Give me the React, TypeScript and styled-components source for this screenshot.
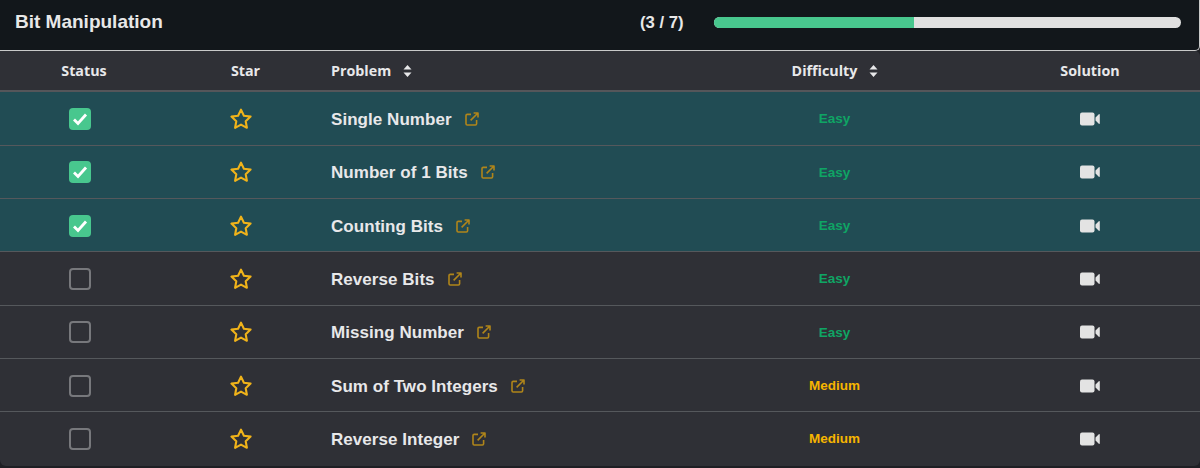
import React from "react";
import styled, { createGlobalStyle } from "styled-components";

const Global = createGlobalStyle`
  html, body { margin: 0; padding: 0; background: #1c1f24; }
  body { font-family: "Liberation Sans", Arial, sans-serif; overflow: hidden; }
`;
const Page = styled.div`width: 1200px; height: 468px; background: #1e1f24; overflow: hidden;`;
const TopBar = styled.div`
  display: flex; align-items: center; padding-left: 15px; box-sizing: border-box; height: 51px;
  background: #12171b; border-bottom: 1px solid #c9c9c9; border-right: 1px solid #c9c9c9;
  border-bottom-right-radius: 5px;
`;
const Title = styled.div`
  width: 625px; padding-bottom: 6px; color: #e8e8e8; font-size: 19px; font-weight: 700;
`;
const Count = styled.div`
  width: 74px; padding-bottom: 4px; color: #e8e8e8; font-size: 16.7px; font-weight: 700;
`;
const Track = styled.div`
  width: 467px; height: 11px; margin-bottom: 5px; border-radius: 6px; background: #e0e0e0; overflow: hidden;
`;
const Fill = styled.div<{ $pct: number }>`height: 100%; width: ${(p) => p.$pct}%; background: #48c78e;`;
const Columns = `display: grid; grid-template-columns: 168px 155px 367px 290px 220px; align-items: center;`;
const Head = styled.div`
  ${Columns} height: 41.3px; box-sizing: border-box; border-bottom: 2px solid #55565a; background: #2f3036;
  border-top-right-radius: 5px;
  color: #e8e8ea; font-family: "Open Sans", sans-serif; font-size: 14.3px; font-weight: 700;
`;
const HeadCell = styled.div<{ $left?: boolean }>`
  display: flex; align-items: center; gap: 12px; padding-left: ${(p) => (p.$left ? "8px" : "0")};
  justify-content: ${(p) => (p.$left ? "flex-start" : "center")};
`;
const Row = styled.div<{ $done: boolean }>`
  ${Columns} height: 53.33px; box-sizing: border-box; padding-top: 1px; border-bottom: 1px solid #55585c;
  background: ${(p) => (p.$done ? "#214c54" : "#2f3036")};
  &:last-child { border-bottom: none; padding-bottom: 1px; border-radius: 0 0 6px 6px; }
`;
const Center = styled.div`display: flex; justify-content: center; align-items: center;`;
const CheckCell = styled.div`display: flex; justify-content: center; align-items: center; padding-right: 8px;`;
const StarCell = styled.div`display: flex; justify-content: center; align-items: center; padding-right: 10px;`;
const LevelCell = styled.div`display: flex; justify-content: center; align-items: center; padding-right: 1px;`;
const Check = styled.div<{ $on: boolean }>`
  width: 22px; height: 22px; box-sizing: border-box; border-radius: 4px;
  display: flex; align-items: center; justify-content: center;
  background: ${(p) => (p.$on ? "#48c78e" : "transparent")};
  border: ${(p) => (p.$on ? "none" : "2px solid #77787c")};
`;
const ProblemCell = styled.div`display: flex; align-items: center; gap: 13px; padding-left: 8px;`;
const Name = styled.span`color: #e8e8ea; font-size: 17px; font-weight: 700; letter-spacing: 0.05px; padding-top: 2px;`;
const Level = styled.span<{ $c: string }>`color: ${(p) => p.$c}; font-size: 13.5px; font-weight: 700;`;

const Sort = () => (
  <svg width="9" height="14" viewBox="0 0 9 14"><path fill="#e8e8ea" d="M4.5 1 8.5 5.6H.5zM4.5 13 .5 8.4h8z" /></svg>
);
const Tick = () => (
  <svg width="22" height="22" viewBox="0 0 22 22"><path d="M5 11.5 9 15.5 17 6.5" fill="none" stroke="#fff" strokeWidth="2.8" /></svg>
);
const Star = () => (
  <svg width="24" height="24" viewBox="0 0 24 24">
    <path d="M12 2.6l2.9 6.1 6.7.9-4.9 4.6 1.2 6.6L12 17.6l-5.9 3.2 1.2-6.6-4.9-4.6 6.7-.9z" fill="none" stroke="#f0b31a" strokeWidth="2.1" strokeLinejoin="round" />
  </svg>
);
const Ext = () => (
  <svg width="14" height="14" viewBox="0 0 14 14" fill="none" stroke="#b0851a" strokeWidth="1.6" strokeLinejoin="round">
    <path d="M6 2.4H2.2A1.2 1.2 0 0 0 1 3.6v8.2A1.2 1.2 0 0 0 2.2 13h8.2a1.2 1.2 0 0 0 1.2-1.2V8M5.6 8.4 13 1M8.6 1H13v4.4" />
  </svg>
);
const Video = () => (
  <svg width="20" height="14" viewBox="0 0 20 14">
    <rect x="0" y="0.5" width="14.5" height="13" rx="2" fill="#e3e3e3" />
    <path fill="#e3e3e3" d="M15.5 5.5 18.8 2.2c.4-.4 1-.1 1 .5v8.6c0 .6-.6.9-1 .5L15.5 8.5z" />
  </svg>
);

const rows = [
  ["Single Number", "Easy", true],
  ["Number of 1 Bits", "Easy", true],
  ["Counting Bits", "Easy", true],
  ["Reverse Bits", "Easy", false],
  ["Missing Number", "Easy", false],
  ["Sum of Two Integers", "Medium", false],
  ["Reverse Integer", "Medium", false],
] as const;

export default function App() {
  return (
    <Page>
      <Global />
      <TopBar>
        <Title>Bit Manipulation</Title>
        <Count>(3 / 7)</Count>
        <Track><Fill $pct={(3 / 7) * 100} /></Track>
      </TopBar>
      <Head>
        <HeadCell>Status</HeadCell>
        <HeadCell>Star</HeadCell>
        <HeadCell $left>Problem <Sort /></HeadCell>
        <HeadCell>Difficulty <Sort /></HeadCell>
        <HeadCell>Solution</HeadCell>
      </Head>
      {rows.map(([name, level, done]) => (
        <Row key={name} $done={done}>
          <CheckCell><Check $on={done}>{done && <Tick />}</Check></CheckCell>
          <StarCell><Star /></StarCell>
          <ProblemCell><Name>{name}</Name><Ext /></ProblemCell>
          <LevelCell><Level $c={level === "Easy" ? "#0fa564" : "#f7b500"}>{level}</Level></LevelCell>
          <Center><Video /></Center>
        </Row>
      ))}
    </Page>
  );
}
